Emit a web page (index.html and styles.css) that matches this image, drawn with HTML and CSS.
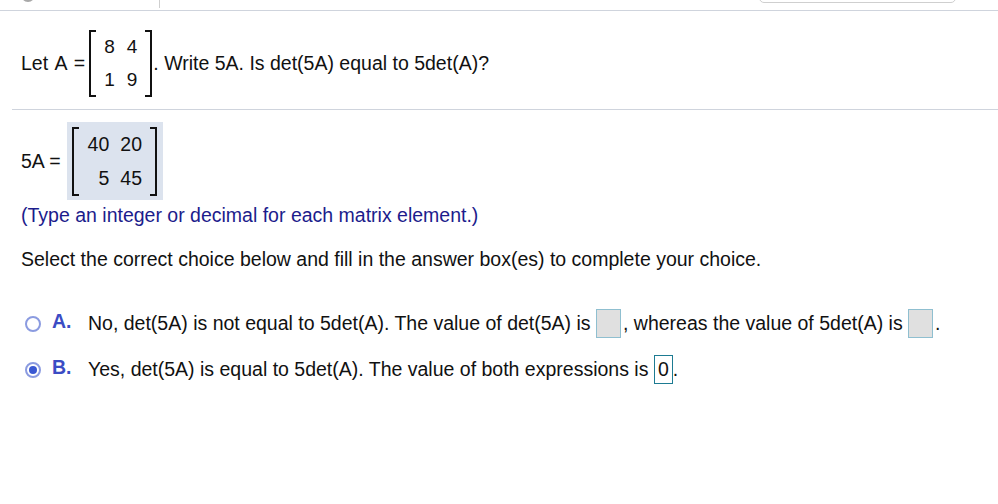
FILE: index.html
```html
<!DOCTYPE html>
<html>
<head>
<meta charset="utf-8">
<link rel="stylesheet" href="styles.css">
</head>
<body>
<div class="header">
  <span class="hdr-blob"></span>
  <span class="hdr-divider"></span>
  <span class="hdr-spacer"></span>
  <span class="hdr-box"></span>
</div>

<div class="question">
  <span class="label">Let A =</span>
  <span class="mat mat-a">
    <span class="br br-l"></span>
    <span class="cells">
      <span>8</span><span>4</span>
      <span>1</span><span>9</span>
    </span>
    <span class="br br-r"></span>
  </span>
  <span class="qtext">. Write 5A. Is det(5A) equal to 5det(A)?</span>
</div>

<div class="sep"></div>

<div class="answer-row">
  <span class="label">5A =</span>
  <span class="shade">
    <span class="mat mat-b">
      <span class="br br-l"></span>
      <span class="cells">
        <span>40</span><span>20</span>
        <span>5</span><span>45</span>
      </span>
      <span class="br br-r"></span>
    </span>
  </span>
</div>

<p class="hint">(Type an integer or decimal for each matrix element.)</p>
<p class="instr">Select the correct choice below and fill in the answer box(es) to complete your choice.</p>

<div class="choices">
  <div class="choice">
    <span class="radio"></span>
    <span class="letter">A.</span>
    <span class="ctext">No, det(5A) is not equal to 5det(A). The value of det(5A) is <span class="abox empty"></span>, whereas the value of 5det(A) is <span class="abox empty"></span>.</span>
  </div>
  <div class="choice">
    <span class="radio checked"></span>
    <span class="letter">B.</span>
    <span class="ctext">Yes, det(5A) is equal to 5det(A). The value of both expressions is <span class="abox filled">0</span>.</span>
  </div>
</div>
</body>
</html>
```
FILE: styles.css
```css
html, body {
  margin: 0;
  padding: 0;
  background: #fff;
}
body {
  font-family: "Liberation Sans", Arial, sans-serif;
  font-size: 19.5px;
  color: #111;
  width: 998px;
  height: 504px;
  overflow: hidden;
}

/* top chrome (clipped) */
.header {
  height: 10px;
  border-bottom: 1px solid #cfd4dd;
  display: flex;
  align-items: flex-end;
  overflow: hidden;
}
.hdr-blob {
  width: 14px;
  height: 14px;
  border-radius: 50%;
  background: #a8a8a8;
  margin-left: 21px;
  margin-bottom: 8px;
  flex: none;
}
.hdr-divider {
  width: 1px;
  height: 8px;
  background: #cfcfcf;
  margin-left: 124px;
  margin-bottom: 2px;
  flex: none;
}
.hdr-spacer { flex: 1; }
.hdr-box {
  width: 195px;
  height: 20px;
  border: 1px solid #cfcfcf;
  border-radius: 5px;
  margin-right: 42px;
  margin-bottom: 7px;
  flex: none;
}

/* question */
.question {
  display: flex;
  align-items: center;
  padding-left: 21px;
  margin-top: 19px;
}
.label { white-space: nowrap; word-spacing: 2px; }

.mat {
  display: inline-flex;
  align-items: stretch;
}
.br {
  width: 5px;
  border: 2px solid #111;
}
.br-l { border-right: none; }
.br-r { border-left: none; }
.cells {
  display: grid;
  grid-template-columns: auto auto;
  align-items: center;
  justify-items: end;
  line-height: 1;
}

.mat-a { margin-left: 4px; }
.mat-a .br { height: 63px; }
.mat-a .cells {
  grid-template-rows: 33px 33px;
  column-gap: 12px;
  padding: 0 8px 0 8px;
  font-size: 19px;
}
.qtext { white-space: nowrap; margin-left: 1px; }

.sep {
  margin-top: 12px;
  margin-left: 12px;
  border-top: 1px solid #cfd4dd;
}

/* 5A = */
.answer-row {
  display: flex;
  align-items: center;
  padding-left: 21px;
  margin-top: 12px;
}
.answer-row .label { word-spacing: 0; }
.shade {
  background: #dce3ee;
  padding: 5px 6px 4px 5px;
  margin-left: 6px;
  display: inline-flex;
}
.mat-b .br { height: 65px; }
.mat-b .cells {
  grid-template-rows: 34.5px 34.5px;
  column-gap: 11px;
  padding: 0 8px 0 9px;
  font-size: 19.5px;
}

.hint {
  margin: 4px 0 0 21px;
  color: #1c1c8c;
  line-height: 22px;
}
.instr {
  margin: 22px 0 0 21px;
  line-height: 22px;
}

/* choices */
.choices {
  margin-top: 39px;
  padding-left: 25px;
}
.choice {
  display: flex;
  align-items: center;
  height: 30px;
  margin-bottom: 16px;
  white-space: nowrap;
}
.radio {
  width: 12px;
  height: 12px;
  border: 2px solid #8b9be0;
  border-radius: 50%;
  flex: none;
  display: flex;
  align-items: center;
  justify-content: center;
}
.radio.checked::after {
  content: "";
  width: 8px;
  height: 8px;
  border-radius: 50%;
  background: #3a58d2;
}
.letter {
  font-weight: bold;
  color: #3b4cc4;
  font-size: 19.5px;
  width: 36px;
  margin-left: 11px;
  flex: none;
  position: relative;
  top: -3px;
}
.ctext { line-height: 30px; }
.abox {
  display: inline-block;
  vertical-align: middle;
  box-sizing: border-box;
  height: 29px;
  position: relative;
  top: -2px;
}
.abox.empty {
  width: 25px;
  background: #e0e0e0;
  border: 1px solid #8fbfd0;
  margin-right: 2px;
}
.abox.filled {
  width: 19px;
  border: 1px solid #1d7b92;
  background: #fff;
  text-align: center;
  line-height: 27px;
}
```
